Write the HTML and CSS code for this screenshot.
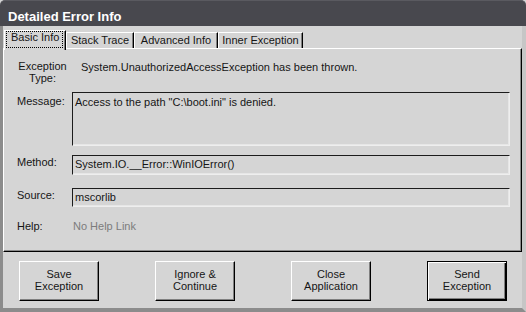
FILE: index.html
```html
<!DOCTYPE html>
<html><head>
<meta charset="UTF-8">
<title>Detailed Error Info</title>
<link rel="stylesheet" href="styles.css">
</head>
<body>

<div class="window">
	<div class="titlebar">Detailed Error Info</div>
	<div class="frame">
		<div class="tabs">
			<div class="tab active"><span>Basic Info</span></div>
			<div class="tab tab-stack">Stack Trace</div>
			<div class="tab tab-adv">Advanced Info</div>
			<div class="tab tab-inner">Inner Exception</div>
		</div>

		<div class="panel">
			<div class="row row-type">
				<div class="label label-center">Exception<br>Type:</div>
				<div class="value">System.UnauthorizedAccessException has been thrown.</div>
			</div>
			<div class="row row-msg">
				<div class="label lbl-msg">Message:</div>
				<div class="field field-tall">Access to the path "C:\boot.ini" is denied.</div>
			</div>
			<div class="row row-method">
				<div class="label">Method:</div>
				<div class="field">System.IO.__Error::WinIOError()</div>
			</div>
			<div class="row row-source">
				<div class="label">Source:</div>
				<div class="field">mscorlib</div>
			</div>
			<div class="row row-help">
				<div class="label">Help:</div>
				<div class="value value-dim">No Help Link</div>
			</div>
		</div>

		<div class="buttons">
			<button class="btn">Save<br>Exception</button>
			<button class="btn">Ignore &amp;<br>Continue</button>
			<button class="btn">Close<br>Application</button>
			<button class="btn default">Send<br>Exception</button>
		</div>
	</div>
</div>

</body>
</html>
```

FILE: styles.css
```css
* {box-sizing: border-box;}

body {
	margin: 0;
	background: #d5d5d5;
	font: normal 400 11px/12px 'Liberation Sans', Arial, sans-serif;
	color: #151515;}

.window {
	width: 526px;
	height: 312px;}

.titlebar {
	height: 26px;
	padding: 6px 0 0 8px;
	line-height: 20px;
	font-size: 13px;
	font-weight: bold;
	color: #fff;
	background: #48484e;
	border-top: 1px solid #5a5a60;
	border-radius: 5px 5px 0 0;}

.frame {
	height: 286px;
	display: flex;
	flex-direction: column;
	border-style: solid;
	border-width: 0 4px 4px 3px;
	border-color: #8c8c8c #c6c6c6 #8c8c8c #8c8c8c;}

/* tab strip */
.tabs {
	display: flex;
	align-items: flex-end;
	height: 22px;
	padding: 4px 0 0 1px;}

.tab {
	height: 16px;
	padding-top: 1px;
	line-height: 13px;
	text-align: center;
	border-top: 1px solid #fff;
	border-left: 1px solid #fff;
	border-right: 1px solid #000;
	box-shadow: inset -1px 0 #808080;
	white-space: nowrap;}

.tab-stack {width: 68px;}
.tab-adv {width: 84px;}
.tab-inner {width: 85px;}

.tab.active {
	position: relative;
	z-index: 1;
	width: 62px;
	height: 20px;
	margin-bottom: -2px;
	padding: 0 2px 0 1px;
	text-align: left;
	background: #d5d5d5;}

.tab.active span {
	display: block;
	padding: 0 5px 4px 4px;
	line-height: 11px;
	border: 1px dotted #000;}

/* page of the tab */
.panel {
	height: 204px;
	padding: 11px 11px 0 13px;
	border-style: solid;
	border-width: 1px;
	border-color: #fff #000 #000 #fff;
	box-shadow: inset -1px -1px #8a8a8a;}

.row {display: flex; align-items: flex-start;}

.label {width: 55px; flex: none;}
.label-center {width: 51px; text-align: center;}
.lbl-msg {margin-top: 3px;}
.row-method .label, .row-source .label {margin-top: 1px;}

.value {margin: 1px 0 0 13px;}
.row-help .value {margin: 0 0 0 1px;}
.value-dim {color: #7c7c7c;}

.row-msg {margin-top: 8px;}
.row-method {margin-top: 9px;}
.row-source {margin-top: 13px;}
.row-help {margin-top: 13px;}

.field {
	width: 438px;
	height: 20px;
	padding: 2px 2px 0;
	border: 1px solid;
	border-color: #1c1c1c #eeeeee #eeeeee #1c1c1c;
	box-shadow: inset -1px -1px #e6e6e6;
	white-space: nowrap;}

.field-tall {height: 54px; padding-top: 3px;}
.row-source .field {height: 19px;}

/* dialog buttons */
.buttons {
	display: flex;
	gap: 56px;
	padding: 9px 0 0 16px;}

.btn {
	width: 80px;
	height: 40px;
	padding: 0 0 2px;
	font: inherit;
	line-height: 12px;
	color: #151515;
	background: #d5d5d5;
	border: 1px solid;
	border-color: #fff #000 #000 #fff;
	box-shadow: inset -1px -1px #808080;}

.btn.default {
	border-color: #000;
	box-shadow: inset 1px 1px #fff, inset -1px -1px #000, inset -2px -2px #808080;}
```
